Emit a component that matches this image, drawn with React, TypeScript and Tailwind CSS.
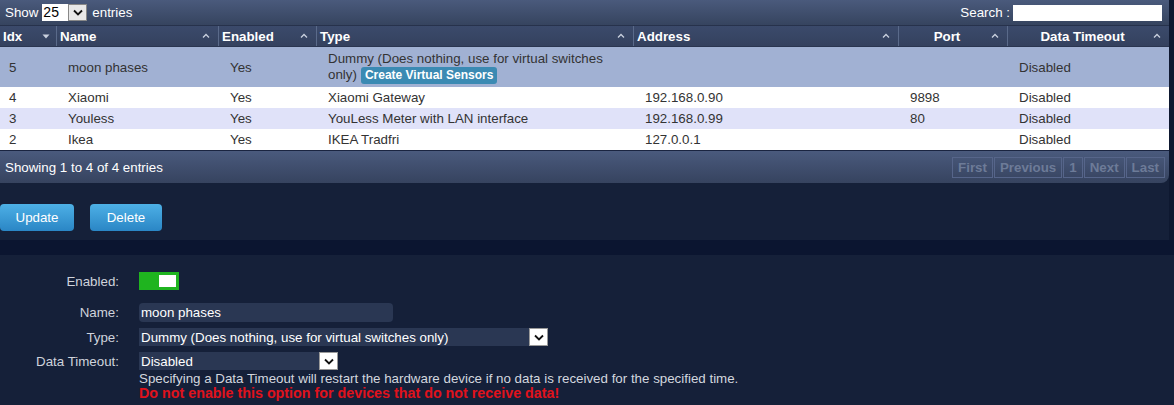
import React from "react";

const Chevron = () => (
  <svg width="10" height="7" viewBox="0 0 10 7">
    <path d="M1 1.5 L5 5.5 L9 1.5" fill="none" stroke="#111" strokeWidth="1.8" />
  </svg>
);

const Caret = () => (
  <svg width="8" height="5" viewBox="0 0 8 5">
    <path d="M1 4.5 L4 1.5 L7 4.5" fill="none" stroke="#c9d0de" strokeWidth="1.3" />
  </svg>
);

const DownTri = () => (
  <svg width="8" height="5" viewBox="0 0 8 5">
    <path d="M0.5 0.5 L7.5 0.5 L4 4.5 Z" fill="#c9d0de" />
  </svg>
);

type Col = { label: string; w: number; center?: boolean; sort: "down" | "up" };
const cols: Col[] = [
  { label: "Idx", w: 56, sort: "down" },
  { label: "Name", w: 162, sort: "up" },
  { label: "Enabled", w: 98, sort: "up" },
  { label: "Type", w: 317, sort: "up" },
  { label: "Address", w: 265, sort: "up" },
  { label: "Port", w: 109, center: true, sort: "up" },
  { label: "Data Timeout", w: 162, center: true, sort: "up" },
];

const rows = [
  { idx: "5", name: "moon phases", en: "Yes", type: "dummy", addr: "", port: "", dt: "Disabled", bg: "bg-[#a1b1d3]", h: "h-[40px]" },
  { idx: "4", name: "Xiaomi", en: "Yes", type: "Xiaomi Gateway", addr: "192.168.0.90", port: "9898", dt: "Disabled", bg: "bg-white", h: "h-[21px]" },
  { idx: "3", name: "Youless", en: "Yes", type: "YouLess Meter with LAN interface", addr: "192.168.0.99", port: "80", dt: "Disabled", bg: "bg-[#e0e2f9]", h: "h-[21px]" },
  { idx: "2", name: "Ikea", en: "Yes", type: "IKEA Tradfri", addr: "127.0.0.1", port: "", dt: "Disabled", bg: "bg-white", h: "h-[21px]" },
];

export default function App() {
  return (
    <div className="w-[1174px] h-[405px] overflow-hidden bg-[#0e1830] font-['Liberation_Sans',Arial,sans-serif] text-[13.33px] leading-[15px]">
      <div className="w-[1169px] h-[240px] bg-[#152039]">
        {/* top bar */}
        <div className="h-[25px] flex items-center justify-between pl-[5px] pr-[7px] bg-gradient-to-b from-[#4a5a7c] to-[#36445f] text-white">
          <div className="flex items-center">
            <span>Show</span>
            <div className="ml-[4px] flex items-center h-[17px] w-[45px] bg-white">
              <span className="pl-[1px] text-black text-[14px] w-[26px]">25</span>
              <div className="h-[17px] w-[19px] bg-[#e8e8e8] border border-[#888] flex items-center justify-center">
                <Chevron />
              </div>
            </div>
            <span className="ml-[5px]">entries</span>
          </div>
          <div className="flex items-center">
            <span>Search :</span>
            <div className="ml-[3px] w-[149px] h-[16px] bg-white" />
          </div>
        </div>
        {/* table */}
        <div className="border-t border-[#27324c]">
          <div className="flex h-[21px] bg-gradient-to-b from-[#42527400] to-[#34415e] bg-[#3b4a6b] text-white font-bold border-b border-[#2a3550]">
            {cols.map((c, i) => (
              <div
                key={c.label}
                style={{ width: c.w }}
                className={`relative flex items-center h-full ${i > 0 ? "border-l border-[#5a6a8a]" : ""} ${c.center ? "justify-center pr-[12px]" : "pl-[3px]"}`}
              >
                <span>{c.label}</span>
                {c.sort === "down" ? (
                  <span className="absolute right-[6px] top-[8px]"><DownTri /></span>
                ) : (
                  <span className="absolute right-[8px] top-[7px]"><Caret /></span>
                )}
              </div>
            ))}
          </div>
          {rows.map((r) => (
            <div key={r.idx} className={`flex ${r.h} ${r.bg} text-[#333] items-center`}>
              <div className="w-[56px] pl-[9px]">{r.idx}</div>
              <div className="w-[162px] pl-[12px]">{r.name}</div>
              <div className="w-[98px] pl-[12px]">{r.en}</div>
              <div className="w-[317px] pl-[12px]">
                {r.type === "dummy" ? (
                  <div className="leading-[16px]">
                    <div>Dummy (Does nothing, use for virtual switches</div>
                    <div className="flex items-center">
                      <span>only)</span>
                      <span className="ml-[4px] inline-flex items-center h-[17px] px-[4px] rounded-[3px] bg-[#3b8ab3] text-white font-bold text-[12px]">
                        Create Virtual Sensors
                      </span>
                    </div>
                  </div>
                ) : (
                  r.type
                )}
              </div>
              <div className="w-[265px] pl-[12px]">{r.addr}</div>
              <div className="w-[109px] pl-[12px]">{r.port}</div>
              <div className="w-[162px] pl-[12px]">{r.dt}</div>
            </div>
          ))}
          <div className="h-[1px] bg-[#1a2440]" />
          {/* footer */}
          <div className="h-[32px] flex items-center justify-between pl-[5px] pr-[4px] rounded-br-[8px] bg-gradient-to-b from-[#4a5a7d] to-[#36435f] text-white">
            <span>Showing 1 to 4 of 4 entries</span>
            <div className="flex items-center h-[21px] font-bold text-[#6d7b98]">
              {["First", "Previous", "1", "Next", "Last"].map((p) => (
                <div key={p} className="h-[21px] flex items-center px-[5px] border border-[#56658a] ml-[1px]">
                  {p}
                </div>
              ))}
            </div>
          </div>
        </div>
        {/* buttons */}
        <div className="flex mt-[21px] gap-[16px]">
          <button className="w-[74px] h-[27px] rounded-[4px] bg-gradient-to-b from-[#4db0e6] to-[#2a86c5] text-white text-[13.33px]">
            Update
          </button>
          <button className="w-[72px] h-[27px] rounded-[4px] bg-gradient-to-b from-[#4db0e6] to-[#2a86c5] text-white text-[13.33px]">
            Delete
          </button>
        </div>
      </div>
      <div className="h-[15px] bg-[#0b1530]" />
      <div className="h-[150px] bg-[#152039] pt-[17px] text-white">
        <div className="flex items-center h-[18px]">
          <div className="w-[119px] text-right text-[#cfd3dc]">Enabled:</div>
          <div className="ml-[20px] w-[40px] h-[18px] bg-[#1fb41f] flex items-center justify-end pr-[3px]">
            <div className="w-[17px] h-[12px] bg-white" />
          </div>
        </div>
        <div className="flex items-center h-[19px] mt-[13px]">
          <div className="w-[119px] text-right text-[#cfd3dc]">Name:</div>
          <div className="ml-[20px] w-[254px] h-[19px] rounded-[4px] bg-[#2a3753] pl-[2px] flex items-center">moon phases</div>
        </div>
        <div className="flex items-center h-[18px] mt-[6px]">
          <div className="w-[119px] text-right text-[#cfd3dc]">Type:</div>
          <div className="ml-[20px] flex items-center h-[18px]">
            <div className="w-[390px] h-[18px] bg-[#2a3753] pl-[2px] flex items-center">Dummy (Does nothing, use for virtual switches only)</div>
            <div className="w-[19px] h-[18px] bg-white border border-[#999] flex items-center justify-center"><Chevron /></div>
          </div>
        </div>
        <div className="flex items-center h-[18px] mt-[6px]">
          <div className="w-[119px] text-right text-[#cfd3dc]">Data Timeout:</div>
          <div className="ml-[20px] flex items-center h-[18px]">
            <div className="w-[180px] h-[18px] bg-[#2a3753] pl-[2px] flex items-center">Disabled</div>
            <div className="w-[19px] h-[18px] bg-white border border-[#999] flex items-center justify-center"><Chevron /></div>
          </div>
        </div>
        <div className="ml-[139px] mt-[1px] text-[#d3d7df]">
          Specifying a Data Timeout will restart the hardware device if no data is received for the specified time.
        </div>
        <div className="ml-[139px] text-[#e0121c] font-bold text-[14.3px] leading-[15px]">
          Do not enable this option for devices that do not receive data!
        </div>
      </div>
    </div>
  );
}
